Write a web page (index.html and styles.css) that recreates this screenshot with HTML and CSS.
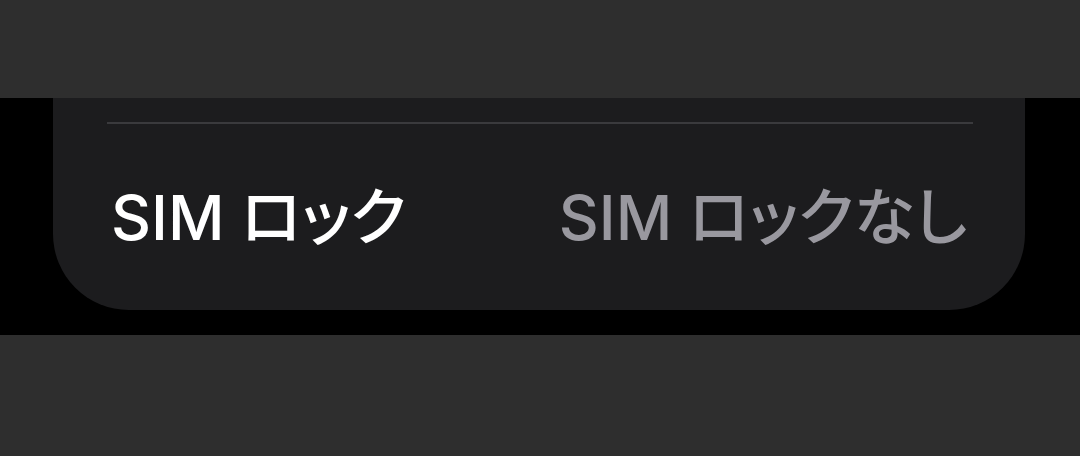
FILE: index.html
```html
<!DOCTYPE html>
<html lang="ja">
<head>
    <meta charset="UTF-8">
    <meta name="viewport" content="width=device-width, initial-scale=1.0">
    <title>SIMロック</title>
    <link rel="stylesheet" href="styles.css">
</head>
<body>
    <div class="band"></div>

    <div class="sheet">
        <div class="card">
            <div class="separator"></div>
            <div class="row">
                <span class="label">SIM ロック</span>
                <span class="value">SIM ロックなし</span>
            </div>
        </div>
    </div>

    <div class="band band-bottom"></div>
</body>
</html>
```

FILE: styles.css
```css
* {
    margin: 0;
    padding: 0;
    box-sizing: border-box;
}

body {
    background-color: #2e2e2e;
    font-family: Inter, "Noto Sans CJK JP", sans-serif;
    width: 1080px;
    height: 456px;
    overflow: hidden;
}

.band {
    height: 98px;
    background-color: #2e2e2e;
}

.band-bottom {
    height: 121px;
}

.sheet {
    background-color: #000;
    height: 237px;
    padding: 0 55px 25px 53px;
}

.card {
    background-color: #1c1c1e;
    height: 212px;
    border-radius: 0 0 76px 76px;
    padding: 24px 52px 0 54px;
}

.separator {
    height: 2px;
    background-color: #3a3a3d;
}

.row {
    display: flex;
    justify-content: space-between;
    align-items: baseline;
    padding: 56px 6px 0 4px;
    font-size: 62px;
    line-height: 76px;
    font-feature-settings: "palt";
}

.label {
    color: #ffffff;
    font-weight: 500;
}

.value {
    color: #99989f;
    font-weight: 500;
}
```
